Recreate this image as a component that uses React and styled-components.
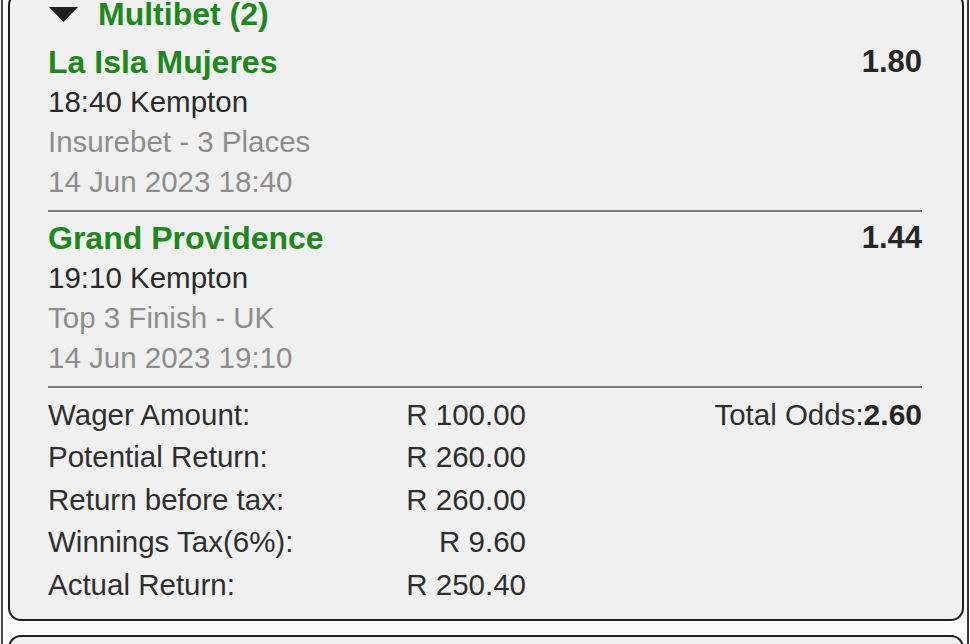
import React from "react";
import styled, { createGlobalStyle } from "styled-components";

const Global = createGlobalStyle`
  html, body { margin: 0; padding: 0; background: #f4f4f4; }
  body { font-family: "Liberation Sans", Arial, sans-serif; }
`;

const Frame = styled.div`
  box-sizing: border-box;
  width: 968px;
  height: 644px;
  margin-left: 1px;
  border-left: 2px solid #4a4a4a;
  border-right: 2px solid #3a3a3a;
  background: #fbfbfb;
  padding: 0 3px 0 5px;
  overflow: hidden;
  display: flex;
  flex-direction: column;
  gap: 14px;
`;

const Card = styled.section`
  box-sizing: border-box;
  border: 2px solid #1e1e1e;
  border-radius: 13px;
  background: #f0f0f0;
  padding: ${(p) => p.$pad || "0 40px 13px 38px"};
  margin-top: ${(p) => p.$mt || "0"};
  flex: ${(p) => (p.$grow ? "1 0 auto" : "0 0 auto")};
  min-height: ${(p) => p.$minh || "auto"};
`;

const Header = styled.div`
  display: flex;
  align-items: center;
  height: 40px;
  margin-bottom: 8px;
`;

const Triangle = styled.svg`
  width: 29px;
  height: 15px;
  margin-left: 1px;
  margin-right: 20px;
  flex: none;
`;

const HeaderTitle = styled.span`
  color: #1b8a1b;
  font-weight: 700;
  font-size: 32px;
  line-height: 40px;
`;

const Bet = styled.div`
  padding: ${(p) => (p.$first ? "0 0 8px" : "6px 0 8px")};
  border-bottom: 2px solid #7a7a7a;
`;

const NameRow = styled.div`
  display: flex;
  justify-content: space-between;
  align-items: center;
  height: 40px;
`;

const Name = styled.span`
  color: #1b8a1b;
  font-weight: 700;
  font-size: 32px;
  line-height: 40px;
`;

const Odds = styled.span`
  color: #262626;
  font-weight: 700;
  font-size: 31px;
  line-height: 40px;
`;

const Line = styled.div`
  color: ${(p) => (p.$muted ? "#8d8d8d" : "#2a2a2a")};
  font-size: 29.5px;
  line-height: 40px;
  height: 40px;
  white-space: nowrap;
`;

const Summary = styled.div`
  display: grid;
  grid-template-columns: 300px 178px 1fr;
  grid-auto-rows: 42.5px;
  align-items: center;
  padding-top: 5.5px;
  color: #2e2e2e;
  font-size: 29.5px;
`;

const Label = styled.span`
  white-space: nowrap;
`;

const Value = styled.span`
  text-align: right;
  white-space: nowrap;
`;

const Total = styled.span`
  text-align: right;
  white-space: nowrap;
  b { font-weight: 700; font-size: 30px; color: #262626; }
`;

const bets = [
  { name: "La Isla Mujeres", odds: "1.80", race: "18:40 Kempton", market: "Insurebet - 3 Places", date: "14 Jun 2023 18:40" },
  { name: "Grand Providence", odds: "1.44", race: "19:10 Kempton", market: "Top 3 Finish - UK", date: "14 Jun 2023 19:10" },
];

const rows = [
  ["Wager Amount:", "R 100.00"],
  ["Potential Return:", "R 260.00"],
  ["Return before tax:", "R 260.00"],
  ["Winnings Tax(6%):", "R 9.60"],
  ["Actual Return:", "R 250.40"],
];

export default function App() {
  return (
    <>
      <Global />
      <Frame>
        <Card $mt="-8px">
          <Header>
            <Triangle viewBox="0 0 29 15">
              <polygon points="0,0 29,0 14.5,15" fill="#1f1f1f" />
            </Triangle>
            <HeaderTitle>Multibet (2)</HeaderTitle>
          </Header>
          {bets.map((b, i) => (
            <Bet key={b.name} $first={i === 0}>
              <NameRow>
                <Name>{b.name}</Name>
                <Odds>{b.odds}</Odds>
              </NameRow>
              <Line>{b.race}</Line>
              <Line $muted>{b.market}</Line>
              <Line $muted>{b.date}</Line>
            </Bet>
          ))}
          <Summary>
            {rows.map(([l, v], i) => (
              <React.Fragment key={l}>
                <Label>{l}</Label>
                <Value>{v}</Value>
                {i === 0 ? (
                  <Total>
                    Total Odds:<b>2.60</b>
                  </Total>
                ) : (
                  <span />
                )}
              </React.Fragment>
            ))}
          </Summary>
        </Card>
        <Card $minh="60px" />
      </Frame>
    </>
  );
}
